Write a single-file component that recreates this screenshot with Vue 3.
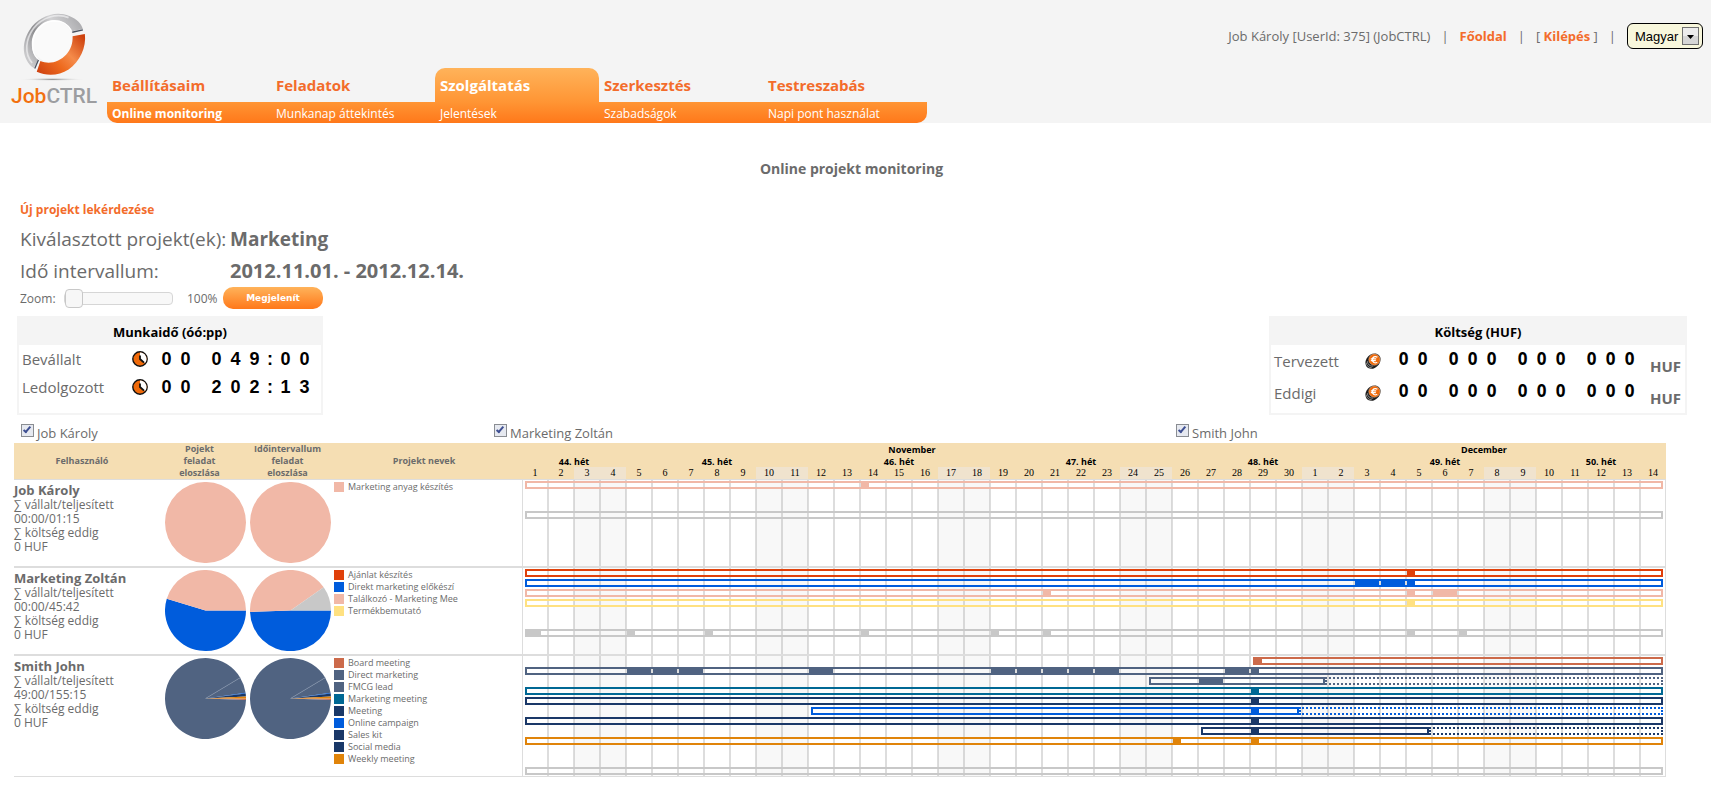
<script setup>
import { ref } from 'vue'

const tabs = ['Beállításaim', 'Feladatok', 'Szolgáltatás', 'Szerkesztés', 'Testreszabás']
const activeTab = 'Szolgáltatás'
const subTabs = ['Online monitoring', 'Munkanap áttekintés', 'Jelentések', 'Szabadságok', 'Napi pont használat']
const activeSub = 'Online monitoring'

const zoom = ref(0)
const language = ref('Magyar')

const workTime = [
  { label: 'Bevállalt', digits: '00 049:00' },
  { label: 'Ledolgozott', digits: '00 202:13' }
]
const cost = [
  { label: 'Tervezett', digits: '00 000 000 000' },
  { label: 'Eddigi', digits: '00 000 000 000' }
]

const people = ref([
  { name: 'Job Károly', shown: true },
  { name: 'Marketing Zoltán', shown: true },
  { name: 'Smith John', shown: true }
])

const DAYS = 44
const weekend = [2, 3, 9, 10, 16, 17, 23, 24, 30, 31, 37, 38]
const days = Array.from({ length: DAYS }, (_, i) => ({
  label: i < 30 ? i + 1 : i - 29,
  off: weekend.includes(i)
}))
const months = [
  { label: 'November', span: 30 },
  { label: 'December', span: 14 }
]
const weeks = [
  { label: '44. hét', span: 4 },
  { label: '45. hét', span: 7 },
  { label: '46. hét', span: 7 },
  { label: '47. hét', span: 7 },
  { label: '48. hét', span: 7 },
  { label: '49. hét', span: 7 },
  { label: '50. hét', span: 5 }
]

const C = {
  pink: '#f1b8a7',
  grey: '#c8c8c8',
  red: '#e0400a',
  blue: '#005cdc',
  yellow: '#ffe181',
  clay: '#cc6a4a',
  slate: '#506381',
  teal: '#006894',
  navy: '#1a3868',
  orange: '#e0840a'
}
const third = (...list) => list.map((at) => ({ at, len: 1 / 3 }))
const full = (...list) => list.map((at) => ({ at, len: 1 }))

const rows = [
  {
    name: 'Job Károly',
    hours: '00:00/01:15',
    cost: '0 HUF',
    pies: [
      [{ from: 0, to: 360, color: C.pink }],
      [{ from: 0, to: 360, color: C.pink }]
    ],
    legend: [{ label: 'Marketing anyag készítés', color: C.pink }],
    slots: 8,
    bars: [
      { slot: 0, color: C.pink, from: 0, to: 44, marks: third(13) },
      { slot: 3, color: C.grey, from: 0, to: 44, marks: [] }
    ]
  },
  {
    name: 'Marketing Zoltán',
    hours: '00:00/45:42',
    cost: '0 HUF',
    pies: [
      [
        { from: 0, to: 197, color: C.blue },
        { from: 197, to: 360, color: C.pink }
      ],
      [
        { from: 0, to: 178, color: C.blue },
        { from: 178, to: 325, color: C.pink },
        { from: 325, to: 360, color: C.grey }
      ]
    ],
    legend: [
      { label: 'Ajánlat készítés', color: C.red },
      { label: 'Direkt marketing előkészí', color: C.blue },
      { label: 'Találkozó - Marketing Mee', color: C.pink },
      { label: 'Termékbemutató', color: C.yellow }
    ],
    slots: 8,
    bars: [
      { slot: 0, color: C.red, from: 0, to: 44, marks: third(34) },
      { slot: 1, color: C.blue, from: 0, to: 44, marks: [...full(32, 33), ...third(34)] },
      { slot: 2, color: C.pink, from: 0, to: 44, marks: [...third(20, 34), ...full(35)] },
      { slot: 3, color: C.yellow, from: 0, to: 44, marks: third(34) },
      { slot: 6, color: C.grey, from: 0, to: 44, marks: [{ at: 0, len: 2 / 3 }, ...third(4, 7, 13, 18, 20, 34, 36)] }
    ]
  },
  {
    name: 'Smith John',
    hours: '49:00/155:15',
    cost: '0 HUF',
    pies: [0, 1].map(() => [
      { from: 0, to: 2, color: C.clay },
      { from: 2, to: 329, color: C.slate },
      { from: 329, to: 352, color: C.slate },
      { from: 352, to: 353, color: C.blue },
      { from: 353, to: 357, color: C.navy },
      { from: 357, to: 360, color: C.orange }
    ]),
    edges: [329],
    legend: [
      { label: 'Board meeting', color: C.clay },
      { label: 'Direct marketing', color: C.slate },
      { label: 'FMCG lead', color: C.slate },
      { label: 'Marketing meeting', color: C.teal },
      { label: 'Meeting', color: C.navy },
      { label: 'Online campaign', color: C.blue },
      { label: 'Sales kit', color: C.navy },
      { label: 'Social media', color: C.navy },
      { label: 'Weekly meeting', color: C.orange }
    ],
    slots: 12,
    bars: [
      { slot: 0, color: C.clay, from: 28, to: 44, marks: [{ at: 28, len: 0.4 }] },
      { slot: 1, color: C.slate, from: 0, to: 44, marks: [...full(4, 5, 6, 11, 18, 19, 20, 21, 22, 27), ...third(28)] },
      { slot: 2, color: C.slate, from: 24, to: 31, late: true, marks: full(26) },
      { slot: 3, color: C.teal, from: 0, to: 44, marks: third(28) },
      { slot: 4, color: C.navy, from: 0, to: 44, marks: third(28) },
      { slot: 5, color: C.blue, from: 11, to: 30, late: true, marks: third(28) },
      { slot: 6, color: C.navy, from: 0, to: 44, marks: third(28) },
      { slot: 7, color: C.navy, from: 26, to: 35, late: true, marks: third(28) },
      { slot: 8, color: C.orange, from: 0, to: 44, marks: third(25, 28) },
      { slot: 11, color: C.grey, from: 0, to: 44, marks: [] }
    ]
  }
]

const pct = (d) => `${(d / DAYS) * 100}%`
const laneStyle = (bar) => ({ top: `${bar.slot * 10 + 1}px`, color: bar.color })
const spanStyle = (from, to) => ({
  left: `calc(${pct(from)} + 3px)`,
  width: `calc(${pct(to - from)} - 6px)`
})
const lateStyle = (bar) => ({
  left: `calc(${pct(bar.to)} - 3px)`,
  width: pct(DAYS - bar.to)
})
const markStyle = (bar, m) => {
  const inset = m.at === bar.from ? 3 : 1
  return {
    left: `calc(${pct(m.at)} + ${inset}px)`,
    width: m.len === 1 ? `calc(${pct(1)} - 2px)` : `calc(${pct(m.len)} - 1px)`
  }
}

const R = 41
const point = (deg) => {
  const a = (deg * Math.PI) / 180
  return `${(R + R * Math.cos(a)).toFixed(2)} ${(R + R * Math.sin(a)).toFixed(2)}`
}
const wedge = (s) =>
  s.to - s.from >= 360
    ? `M0 ${R}A${R} ${R} 0 1 1 ${2 * R} ${R}A${R} ${R} 0 1 1 0 ${R}Z`
    : `M${R} ${R}L${point(s.from)}A${R} ${R} 0 ${s.to - s.from > 180 ? 1 : 0} 1 ${point(s.to)}Z`
</script>

<template>
  <div class="page">
    <header class="top">
      <a class="logo" href="#" aria-label="JobCTRL">
        <svg class="ring" viewBox="60 30 210 220" aria-hidden="true">
          <defs>
            <linearGradient id="silver" x1="0" y1="0.7" x2="1" y2="0.1">
              <stop offset="0" stop-color="#c9c9cb" />
              <stop offset="0.3" stop-color="#8d8d90" />
              <stop offset="0.6" stop-color="#d2d2d4" />
              <stop offset="1" stop-color="#a6a6a9" />
            </linearGradient>
            <linearGradient id="ember" x1="0" y1="0.9" x2="1" y2="0.1">
              <stop offset="0" stop-color="#cf4310" />
              <stop offset="0.35" stop-color="#ee6a1e" />
              <stop offset="0.6" stop-color="#f58b4a" />
              <stop offset="1" stop-color="#cc3f0c" />
            </linearGradient>
            <radialGradient id="shade">
              <stop offset="0" stop-color="#8a8a8a" />
              <stop offset="1" stop-color="#f4f4f4" stop-opacity="0" />
            </radialGradient>
          </defs>
          <ellipse cx="157" cy="239" rx="100" ry="5" fill="url(#shade)" />
          <ellipse cx="157" cy="125" rx="63" ry="64" fill="#fafafa" />
          <path d="M101 205C66 180 62 132 88 91C114 50 165 30 208 48C231 57 244 71 249 87L217 94C205 72 187 60 163 60C126 60 95 92 95 132C95 152 102 168 114 179Z" fill="url(#silver)" />
          <path d="M96 190C72 160 76 119 100 86C126 52 171 38 206 53" fill="none" stroke="#f1f1f2" stroke-width="5" opacity="0.7" />
          <path d="M113 177C101 166 97 151 98 132C99 94 128 64 163 63C186 63 204 74 214 92" fill="none" stroke="#ffffff" stroke-width="4" />
          <path d="M217 97L249 90M115 181L104 206" stroke="#4a5260" stroke-width="4" fill="none" />
          <path d="M218 109L255 102C260 142 240 185 206 209C177 228 141 230 110 216L121 184C149 195 179 186 199 164C213 148 219 130 218 109Z" fill="url(#ember)" />
        </svg>
        <span class="brand"><span class="job">Job</span>CTRL</span>
      </a>

      <nav class="menu">
        <ul class="main">
          <li v-for="t in tabs" :key="t"><a href="#" :class="{ active: t === activeTab }">{{ t }}</a></li>
        </ul>
        <ul class="sub">
          <li v-for="t in subTabs" :key="t"><a href="#" :class="{ active: t === activeSub }">{{ t }}</a></li>
        </ul>
      </nav>

      <div class="user">
        <span>Job Károly [UserId: 375] (JobCTRL)</span>
        <span>|</span>
        <a href="#">Főoldal</a>
        <span>|</span>
        <span>[ <a href="#">Kilépés</a> ]</span>
        <span>|</span>
        <span class="lang">
          <select v-model="language" aria-label="Nyelv">
            <option>Magyar</option>
            <option>English</option>
          </select>
          <svg viewBox="0 0 17 18" aria-hidden="true">
            <rect x="0.5" y="0.5" width="16" height="17" fill="#ececec" stroke="#707070" />
            <rect x="1" y="9" width="15" height="8" fill="#d6d6d6" />
            <path d="M5 8h7l-3.5 4z" fill="#000" />
          </svg>
        </span>
      </div>
    </header>

    <main>
      <h1>Online projekt monitoring</h1>

      <section class="query">
        <a class="new" href="#">Új projekt lekérdezése</a>
        <dl>
          <dt>Kiválasztott projekt(ek):</dt>
          <dd>Marketing</dd>
          <dt>Idő intervallum:</dt>
          <dd class="range">2012.11.01. - 2012.12.14.</dd>
        </dl>
        <div class="zoom">
          <label for="zoom">Zoom:</label>
          <input id="zoom" v-model="zoom" type="range" min="0" max="100" />
          <output for="zoom">100%</output>
          <button type="button">Megjelenít</button>
        </div>
      </section>

      <div class="panels">
        <section class="panel time">
          <h2>Munkaidő (óó:pp)</h2>
          <div v-for="r in workTime" :key="r.label" class="line">
            <span class="label">{{ r.label }}</span>
            <svg class="icon" viewBox="0 0 16 16" aria-hidden="true">
              <circle cx="8" cy="8" r="7.2" fill="#f06a0a" stroke="#111" stroke-width="1.4" />
              <path d="M8 1.6A6.4 6.4 0 0 1 13 12L8 8Z" fill="#fff" />
              <path d="M8 4.4V8L12 11.6" fill="none" stroke="#111" stroke-width="1.8" />
            </svg>
            <span class="digits">
              <span v-for="(d, i) in r.digits" :key="i" :class="{ thin: d === ' ' || d === ':' }">{{ d }}</span>
            </span>
          </div>
        </section>

        <section class="panel cost">
          <h2>Költség (HUF)</h2>
          <div v-for="r in cost" :key="r.label" class="line">
            <span class="label">{{ r.label }}</span>
            <svg class="icon" viewBox="0 0 16 16" aria-hidden="true">
              <path d="M0.4 9.6C0.4 6 4 0.6 9.4 0.4C13 0.3 15.6 2.8 15.6 6.2C15.6 11 11 15.8 6.2 15.8C2.6 15.8 0.4 13.4 0.4 9.6Z" fill="#1c1c1c" />
              <path d="M1.2 9.6C1.4 12.6 3.6 14.8 6.8 14.8M2.3 8.2C2.5 11.4 4.8 13.4 8.2 13.2" fill="none" stroke="#b8b8b8" stroke-width="0.7" />
              <ellipse cx="9.4" cy="6.6" rx="5.6" ry="5.6" fill="#f06a0a" stroke="#fbc9a4" stroke-width="0.5" />
              <path d="M12.4 4.2C9.9 2.6 7.4 4.2 7.4 6.7C7.4 9.2 9.8 10.8 12.2 9.2M5.8 5.9H11.2M5.8 7.6H10.8" fill="none" stroke="#fff" stroke-width="1.3" />
            </svg>
            <span class="digits">
              <span v-for="(d, i) in r.digits" :key="i" :class="{ thin: d === ' ' }">{{ d }}</span>
            </span>
            <span class="unit">HUF</span>
          </div>
        </section>
      </div>

      <div class="filters">
        <label v-for="p in people" :key="p.name"><input v-model="p.shown" type="checkbox" />{{ p.name }}</label>
      </div>

      <table>
        <colgroup>
          <col class="c-user" />
          <col class="c-pie" />
          <col class="c-pie" />
          <col class="c-names" />
          <col v-for="(d, i) in days" :key="i" />
        </colgroup>
        <thead>
          <tr>
            <th rowspan="3" class="h-user">Felhasználó</th>
            <th rowspan="3" class="h-pie">Pojekt<br />feladat<br />eloszlása</th>
            <th rowspan="3" class="h-pie2">Időintervallum<br />feladat<br />eloszlása</th>
            <th rowspan="3" class="h-names">Projekt nevek</th>
            <th v-for="m in months" :key="m.label" :colspan="m.span" class="dark">{{ m.label }}</th>
          </tr>
          <tr>
            <th v-for="w in weeks" :key="w.label" :colspan="w.span" class="dark">{{ w.label }}</th>
          </tr>
          <tr>
            <th v-for="(d, i) in days" :key="i" class="day" :class="{ off: d.off }">{{ d.label }}</th>
          </tr>
        </thead>
        <tbody>
          <tr v-for="r in rows" :key="r.name">
            <td class="who">
              <strong>{{ r.name }}</strong>
              <span>∑ vállalt/teljesített</span>
              <span>{{ r.hours }}</span>
              <span>∑ költség eddig</span>
              <span>{{ r.cost }}</span>
            </td>
            <td v-for="(pie, k) in r.pies" :key="k" class="pie">
              <svg viewBox="0 0 82 82" aria-hidden="true">
                <path v-for="(s, i) in pie" :key="i" :d="wedge(s)" :fill="s.color" />
                <path v-for="e in r.edges || []" :key="e" :d="`M41 41L${point(e)}`" stroke="#8090a8" stroke-width="0.7" />
              </svg>
            </td>
            <td class="names">
              <ul>
                <li v-for="l in r.legend" :key="l.label"><i :style="{ background: l.color }"></i>{{ l.label }}</li>
              </ul>
            </td>
            <td class="gantt" :colspan="DAYS">
              <div class="canvas">
                <div class="grid">
                  <span v-for="(d, i) in days" :key="i" :class="{ off: d.off }"></span>
                </div>
                <div v-for="b in r.bars" :key="b.slot" class="lane" :style="laneStyle(b)">
                  <div class="solid" :style="spanStyle(b.from, b.to)"></div>
                  <div v-if="b.late" class="late" :style="lateStyle(b)"></div>
                  <div v-for="(m, i) in b.marks" :key="i" class="mark" :style="markStyle(b, m)"></div>
                </div>
                <div class="space" :style="{ height: `${r.slots * 10}px` }"></div>
              </div>
            </td>
          </tr>
        </tbody>
      </table>
    </main>
  </div>
</template>

<style>
body {
  margin: 0;
  background: #fff;
}
</style>

<style scoped>
.page {
  font-family: "Open Sans", "Noto Sans", sans-serif;
  font-size: 12px;
  color: #6b6b6b;
}
a {
  color: #f36c2b;
  font-weight: 700;
  text-decoration: none;
}
ul, dl, dd, h1, h2 {
  margin: 0;
  padding: 0;
  list-style: none;
}

.top {
  display: flex;
  align-items: flex-end;
  background: #f4f4f4;
}
.logo {
  width: 107px;
  height: 113px;
  padding-top: 10px;
  flex: none;
  align-self: flex-start;
}
.ring {
  display: block;
  width: 70px;
  height: 73px;
  margin-left: 20px;
}
.brand {
  display: block;
  margin-left: 11px;
  font: 500 21px/26px Roboto, sans-serif;
  color: #9c9da0;
}
.job {
  color: #f2700f;
}
.menu {
  flex: 0 0 820px;
}
.menu ul {
  display: grid;
  grid-template-columns: repeat(5, 1fr);
}
.menu a {
  display: block;
  padding-left: 5px;
}
.main a {
  height: 34px;
  font-size: 15px;
  line-height: 34px;
}
.main .active {
  color: #fff;
  background: linear-gradient(#ffb35a, #ff9534);
  border-radius: 10px 10px 0 0;
}
.sub {
  background: linear-gradient(#ff9534, #ff781a);
  border-radius: 0 0 10px 10px;
}
.sub a {
  height: 21px;
  line-height: 23px;
  color: #fff;
  font-weight: 400;
}
.sub .active {
  font-weight: 700;
}
.user {
  display: flex;
  gap: 11px;
  align-self: flex-start;
  margin-left: auto;
  padding: 23px 8px 0 0;
  font-size: 13px;
  line-height: 26px;
  white-space: nowrap;
}
.lang {
  position: relative;
  display: block;
  height: 26px;
}
.lang select {
  appearance: none;
  display: block;
  width: 76px;
  height: 26px;
  padding: 0 20px 0 7px;
  border: 1px solid #000;
  border-radius: 6px;
  background: #f8f7dc;
  color: #000;
  font: 13px "Liberation Sans", Arial, sans-serif;
}
.lang svg {
  position: absolute;
  right: 4px;
  top: 4px;
  width: 17px;
  height: 18px;
  pointer-events: none;
}

h1 {
  margin: 36px 8px 20px 0;
  font-size: 14px;
  line-height: 20px;
  text-align: center;
}
.query {
  padding-left: 20px;
}
.new {
  display: block;
  line-height: 22px;
}
dl {
  display: grid;
  grid-template-columns: 210px 1fr;
  margin-top: 2px;
  font-size: 19px;
  line-height: 32px;
}
dd {
  font-weight: 700;
}
.range {
  font-size: 20px;
}
.zoom {
  display: flex;
  align-items: center;
  height: 22px;
}
.zoom label {
  width: 44px;
}
.zoom input {
  appearance: none;
  box-sizing: border-box;
  width: 109px;
  height: 13px;
  margin: 0 14px 0 0;
  border: 1px solid #d6d6d6;
  border-radius: 4px;
  background: #f8f8f8;
}
.zoom input::-webkit-slider-thumb {
  appearance: none;
  width: 18px;
  height: 19px;
  border: 1px solid #c8c8c8;
  border-radius: 4px;
  background: #f7f7f7;
}
.zoom output {
  width: 36px;
}
.zoom button {
  width: 100px;
  height: 22px;
  padding: 0;
  border: 0;
  border-radius: 10px;
  background: linear-gradient(#ffb35a, #ff781a);
  color: #fff;
  font: bold 9px "DejaVu Sans", sans-serif;
}

.panels {
  display: flex;
  justify-content: space-between;
  margin: 7px 24px 0 17px;
}
.panel {
  border: 2px solid #f4f4f4;
  box-sizing: border-box;
  height: 99px;
}
.panel h2 {
  height: 27px;
  background: #f4f4f4;
  color: #000;
  font-size: 13px;
  line-height: 29px;
  text-align: center;
}
.time {
  width: 306px;
}
.cost {
  width: 418px;
}
.line {
  display: flex;
  align-items: center;
  height: 28px;
  padding-left: 3px;
}
.cost .line {
  height: 32px;
}
.label {
  font-size: 15px;
  line-height: 28px;
}
.time .label {
  width: 110px;
}
.cost .label {
  width: 91px;
}
.icon {
  width: 16px;
  height: 16px;
}
.digits {
  display: flex;
  color: #000;
  font: bold 18px/28px "Liberation Sans", Arial, sans-serif;
}
.time .digits {
  margin-left: 9px;
}
.cost .digits {
  margin-left: 13px;
  font: bold 17px/28px "Open Sans", sans-serif;
  align-self: flex-start;
}
.digits span {
  width: 19px;
  text-align: center;
}
.digits .thin {
  width: 12px;
}
.unit {
  margin-left: 11px;
  align-self: flex-end;
  font-size: 15px;
  font-weight: 700;
  line-height: 22px;
}

.filters {
  display: grid;
  grid-template-columns: 473fr 682fr 536fr;
  margin-top: 7px;
  padding-left: 20px;
  height: 21px;
  font-size: 13px;
}
.filters label {
  display: flex;
  align-items: center;
  gap: 3px;
}
.filters input {
  appearance: none;
  box-sizing: border-box;
  width: 13px;
  height: 13px;
  margin: 0 0 4px 1px;
  border: 1px solid #8a8d92;
  background: #e6e9f0;
}
.filters input:checked::before {
  content: "";
  display: block;
  width: 2px;
  height: 6px;
  margin: 0 0 0 3px;
  border: solid #3e4f92;
  border-width: 0 2px 2px 0;
  rotate: 40deg;
}

table {
  width: calc(100% - 59px);
  margin: 0 45px 0 14px;
  table-layout: fixed;
  border-spacing: 0;
}
.c-user {
  width: 150px;
}
.c-pie {
  width: 85px;
}
.c-names {
  width: 188px;
}
th {
  height: 12px;
  padding: 0;
  background: #f5deb3;
  font-size: 9px;
  line-height: 12px;
}
.dark {
  height: 10px;
  padding-top: 2px;
  color: #000;
  line-height: 10px;
}
.h-user, .h-pie {
  padding-right: 14px;
}
.h-pie2, .h-names {
  padding-right: 8px;
}
.day {
  color: #000;
  font: 10px/12px "Liberation Serif", "Times New Roman", serif;
}
.day.off {
  background: #f0e3ce;
}
td {
  padding: 0;
  vertical-align: top;
  border: solid #ddd;
  border-width: 1px 0;
}
.who {
  line-height: 14px;
}
.who strong, .who span {
  display: block;
}
.who strong {
  padding-top: 2px;
  font-size: 13px;
  line-height: 16px;
}
.pie svg {
  display: block;
  width: 81px;
  height: 81px;
  margin: 2px 0 0 1px;
}
.names ul {
  padding: 2px 0 0 0;
}
.names li {
  display: flex;
  gap: 4px;
  height: 12px;
  font-size: 9px;
  line-height: 10px;
}
.names i {
  width: 10px;
  height: 10px;
}
.canvas {
  position: relative;
  padding-bottom: 6px;
}
tr:last-child .canvas {
  padding-bottom: 0;
}
.grid {
  position: absolute;
  inset: 0;
  display: grid;
  grid-template-columns: repeat(44, 1fr);
}
.grid span {
  border: solid #ddd;
  border-width: 0 1px;
}
.grid .off {
  background: #f8f8f8;
  border-color: #d8d8d8;
}
.lane {
  position: absolute;
  left: 0;
  right: 0;
  height: 8px;
}
.solid, .late, .mark {
  position: absolute;
  top: 0;
  height: 8px;
  box-sizing: border-box;
}
.solid {
  border: 2px solid;
}
.late {
  border: 2px dotted;
}
.mark {
  background: currentColor;
}
</style>
